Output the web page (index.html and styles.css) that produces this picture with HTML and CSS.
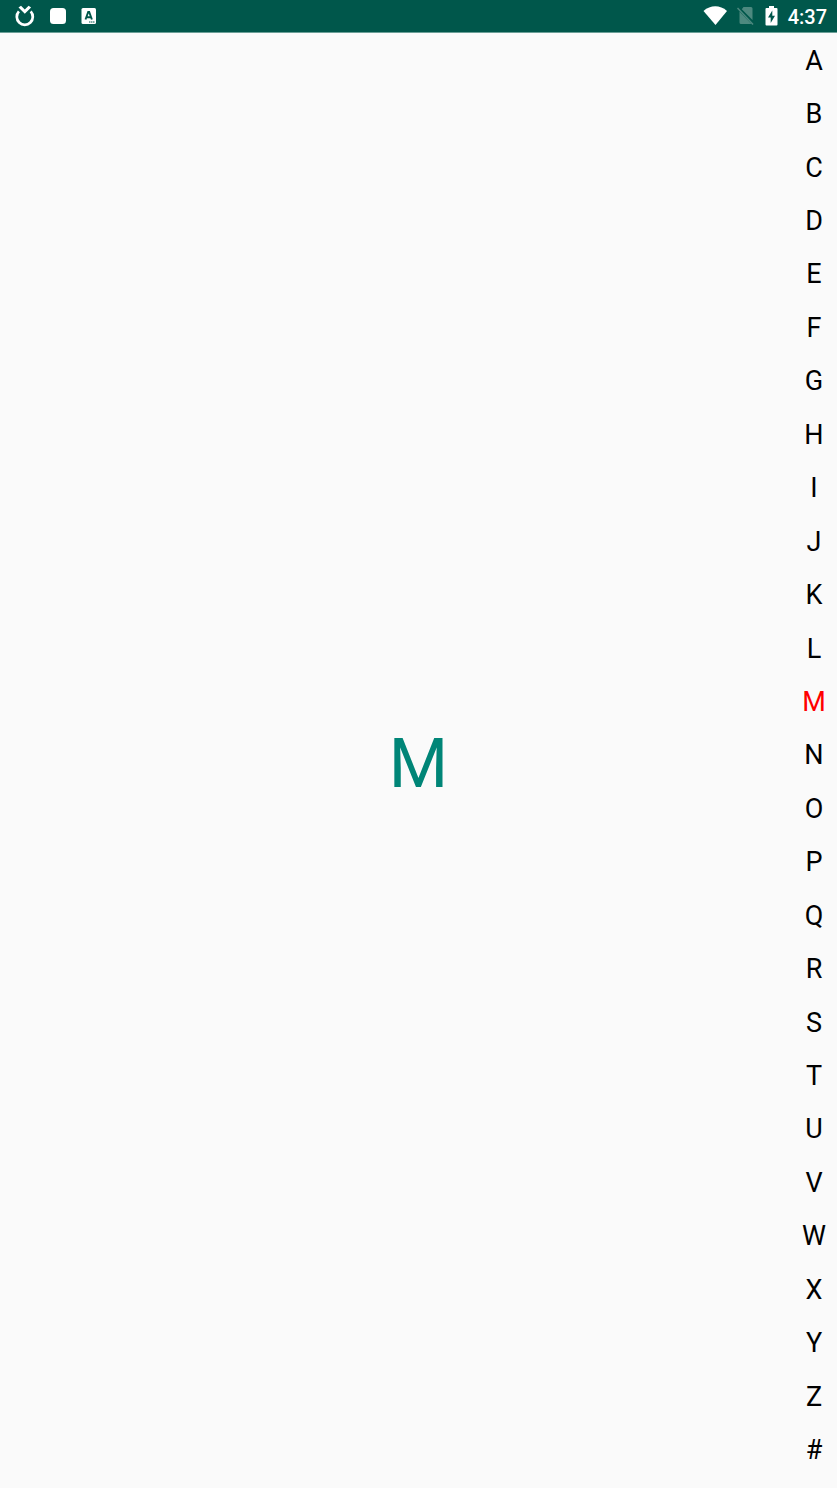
FILE: index.html
```html
<!DOCTYPE html>
<html lang="en">
<head>
<meta charset="utf-8">
<meta name="viewport" content="width=device-width, initial-scale=1">
<title>Letter index</title>
<link rel="stylesheet" href="styles.css">
</head>
<body>
<header class="status-bar">
  <div class="notifications">
    <svg class="icon" viewBox="0 0 20 22" aria-hidden="true"><path d="M3.900 6.400A8 8 0 1 0 15.700 6.400" fill="none" stroke="#fff" stroke-width="2.700"/><path d="M3.500 2.500L6 .8L9.800 4.500L13.600 .8L16.100 2.500L9.800 8.800Z" fill="#fff"/></svg>
    <svg class="icon icon-app" viewBox="0 0 16 16" aria-hidden="true"><rect width="16" height="16" rx="3.500" fill="#fff"/></svg>
    <svg class="icon icon-app" viewBox="0 0 16 16" aria-hidden="true"><rect x=".5" width="14.500" height="16" rx="1.500" fill="#fff"/><path d="M4.500 11.500L7.200 4H8.200L10.900 11.500M5.600 9.200H9.800" fill="none" stroke="#00574b" stroke-width="1.900"/><path d="M8 14H14" stroke="#00574b" stroke-dasharray="1.500 .5"/></svg>
  </div>
  <div class="system">
    <svg class="icon icon-wifi" viewBox="0 0 24 20" aria-hidden="true"><path d="M.5 5C7.500-1.200 17-1.200 24 5L12.500 19Z" fill="#fff"/></svg>
    <svg class="icon icon-sim" viewBox="0 0 18 20" aria-hidden="true"><path d="M6.500 1H14Q15.500 1 15.500 2.500V14L4.800 3.200ZM2.500 5.500L14.500 18H4Q2.500 18 2.500 16.500Z" fill="#4d897f"/><path d="M.5 2L16 18.500" stroke="#4d897f" stroke-width="1.500"/></svg>
    <svg class="icon icon-battery" viewBox="0 0 13 20" aria-hidden="true"><path d="M4 0H9V2H11.500Q12.500 2 12.500 3V18.500Q12.500 19.500 11.500 19.500H1.500Q.5 19.500 .5 18.500V3Q.5 2 1.500 2H4Z" fill="#fff"/><path d="M7.300 4.500L3 11.500H5.700V17L10 9.800H7.300Z" fill="#00574b"/></svg>
    <time class="clock">4:37</time>
  </div>
</header>
<main class="screen">
  <output class="current">M</output>
  <nav class="rail" aria-label="Letter index">
    <button class="letter">A</button>
    <button class="letter">B</button>
    <button class="letter">C</button>
    <button class="letter">D</button>
    <button class="letter">E</button>
    <button class="letter">F</button>
    <button class="letter">G</button>
    <button class="letter">H</button>
    <button class="letter">I</button>
    <button class="letter">J</button>
    <button class="letter">K</button>
    <button class="letter">L</button>
    <button class="letter selected" aria-current="true">M</button>
    <button class="letter">N</button>
    <button class="letter">O</button>
    <button class="letter">P</button>
    <button class="letter">Q</button>
    <button class="letter">R</button>
    <button class="letter">S</button>
    <button class="letter">T</button>
    <button class="letter">U</button>
    <button class="letter">V</button>
    <button class="letter">W</button>
    <button class="letter">X</button>
    <button class="letter">Y</button>
    <button class="letter">Z</button>
    <button class="letter">#</button>
  </nav>
</main>
</body>
</html>
```
FILE: styles.css
```css
* {
  box-sizing: border-box;
}

body {
  display: flex;
  flex-direction: column;
  min-height: 100vh;
  margin: 0;
  background: #fafafa;
  color: #000;
  font-family: Roboto, sans-serif;
}

.status-bar {
  display: flex;
  justify-content: space-between;
  align-items: center;
  padding: 0 10px 0 15px;
  border-bottom: 1px solid #6b9f97;
  background: #00574b;
  color: #fff;
}

.notifications {
  display: flex;
  align-items: center;
  gap: 15px;
}

.system {
  display: flex;
  align-items: center;
  gap: 10px;
}

.icon {
  display: block;
  width: 20px;
  height: 22px;
}

.icon-app {
  width: 16px;
  height: 16px;
}

.icon-wifi {
  width: 24px;
  height: 20px;
}

.icon-sim {
  width: 18px;
  height: 20px;
}

.icon-battery {
  width: 13px;
  height: 20px;
}

.clock {
  padding-top: 2px;
  font-size: 20px;
  font-weight: 500;
  line-height: 30px;
}

.screen {
  display: grid;
  grid-template-columns: 46px 1fr 46px;
  flex: 1;
}

.current {
  grid-column: 2;
  align-self: center;
  padding-top: 6px;
  color: #008577;
  font-size: 68px;
  line-height: 80px;
  text-align: center;
}

.rail {
  display: flex;
  flex-direction: column;
  grid-column: 3;
  padding: 1px 0 11px;
}

.letter {
  flex: 1;
  padding: 0;
  border: 0;
  background: none;
  color: inherit;
  font: inherit;
  font-size: 27px;
  line-height: 32px;
  text-align: center;
}

.selected {
  color: #f00;
}
```
